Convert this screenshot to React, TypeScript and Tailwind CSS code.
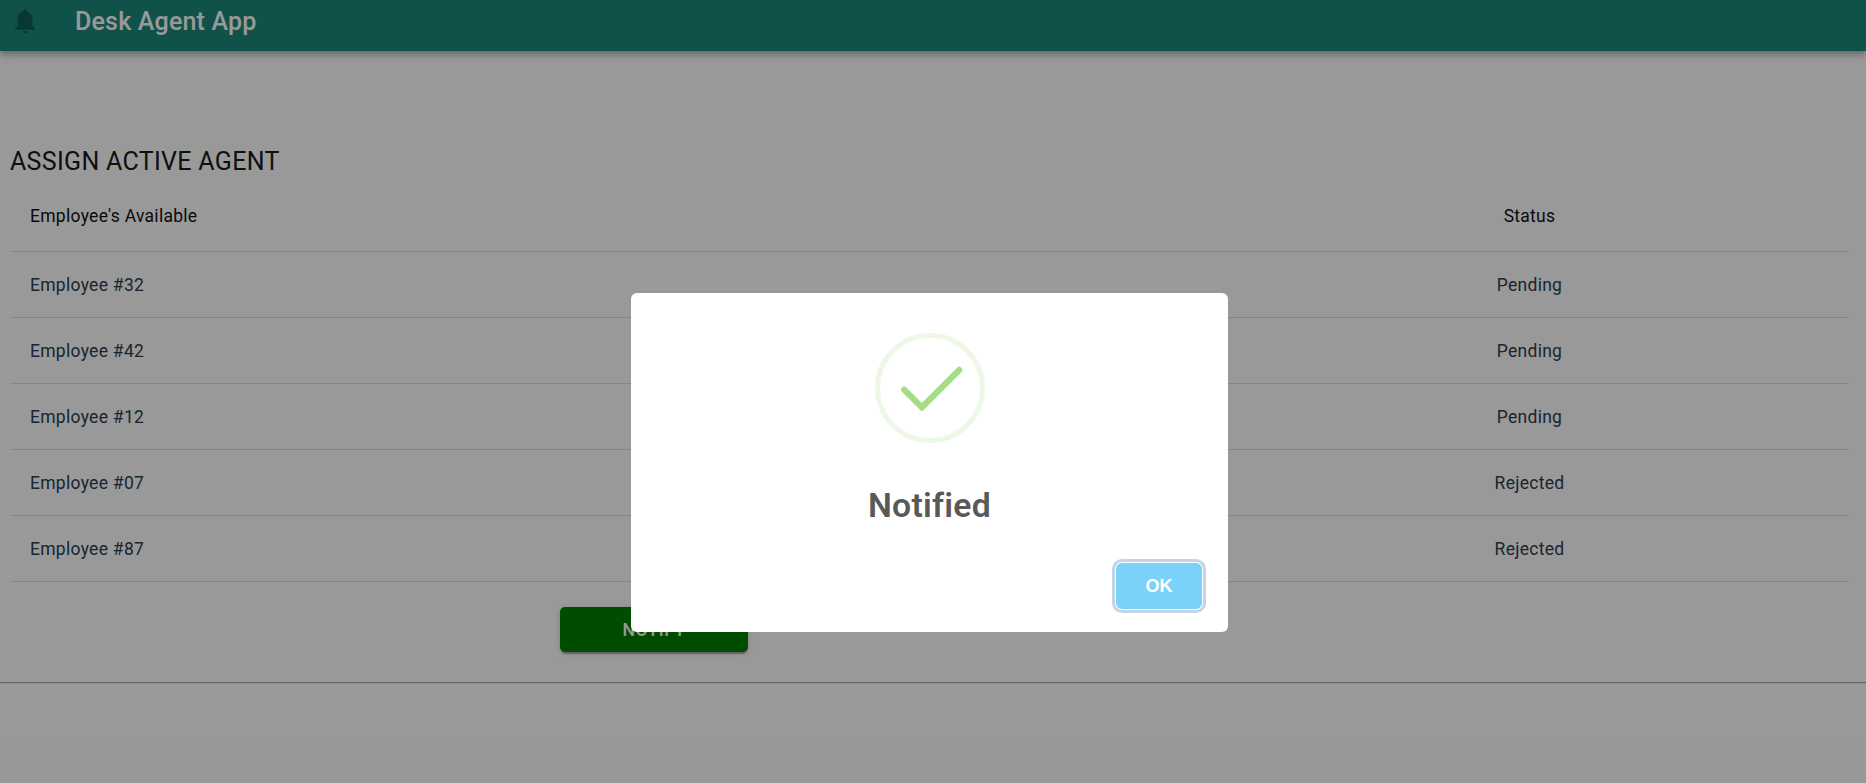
import React from "react";

const employees = [
  { id: "32", status: "Pending" },
  { id: "42", status: "Pending" },
  { id: "12", status: "Pending" },
  { id: "07", status: "Rejected" },
  { id: "87", status: "Rejected" },
];

function Header() {
  return (
    <header className="relative z-10 flex h-[51px] shrink-0 items-start bg-[#1c877b] px-[10px] shadow-[0_2px_5px_-1px_rgba(0,0,0,0.2),0_5px_6px_0_rgba(0,0,0,0.14),0_1px_12px_0_rgba(0,0,0,0.12)]">
      <svg viewBox="0 0 24 24" className="mt-[6px] h-[30px] w-[30px] fill-[#105e54]">
        <path d="M12 22c1.1 0 2-.9 2-2h-4c0 1.1.89 2 2 2zm6-6v-5c0-3.07-1.64-5.64-4.5-6.32V4c0-.83-.67-1.5-1.5-1.5s-1.5.67-1.5 1.5v.68C7.63 5.36 6 7.92 6 11v5l-2 2v1h16v-1l-2-2z" />
      </svg>
      <h1 className="ml-[35px] mt-0.5 text-[25px] font-medium leading-[40px] tracking-[0.0075em] text-white">
        Desk Agent App
      </h1>
    </header>
  );
}

function AgentTable() {
  return (
    <table className="w-full table-fixed border-separate border-spacing-0 text-[17.5px] tracking-[0.016em]">
      <colgroup>
        <col />
        <col className="w-[639px]" />
      </colgroup>
      <thead>
        <tr className="h-[71px] text-[#111]">
          <th className="border-b border-[#e0e0e0] px-5 py-0 text-left font-normal leading-[30px]">
            Employee's Available
          </th>
          <th className="border-b border-[#e0e0e0] px-5 py-0 text-center font-normal leading-[30px]">Status</th>
        </tr>
      </thead>
      <tbody>
        {employees.map((e) => (
          <tr key={e.id} className="h-[66px] text-[#2c3e50]">
            <td className="border-b border-[#e0e0e0] px-5 pb-0 pt-0.5 leading-[25px]">Employee #{e.id}</td>
            <td className="border-b border-[#e0e0e0] px-5 pb-0 pt-0.5 text-center leading-[25px]">{e.status}</td>
          </tr>
        ))}
      </tbody>
    </table>
  );
}

function SuccessIcon() {
  return (
    <svg viewBox="0 0 88 88" className="mt-10 h-[110px] w-[110px]">
      <circle cx="44" cy="44" r="42" fill="none" stroke="#a5dc86" strokeOpacity="0.2" strokeWidth="4" />
      <path d="M2.6 29.6l3 3M55.6 82.6l3 3" stroke="#a5dc86" strokeOpacity="0.25" strokeWidth="0.6" />
      <rect x="18" y="50" width="25" height="5" rx="2" fill="#a5dc86" transform="rotate(45 30.5 52.5)" />
      <rect x="29" y="42" width="47" height="5" rx="2" fill="#a5dc86" transform="rotate(-45 52.5 44.5)" />
    </svg>
  );
}

function Modal() {
  return (
    <div className="fixed inset-0 z-20 flex items-start bg-black/40 pl-[631px] pt-[293px]">
      <div className="flex h-[339px] w-[597px] flex-col items-center rounded-[6px] bg-white">
        <SuccessIcon />
        <h2 className="mt-[43px] text-[33.75px] font-semibold leading-[40px] tracking-[0.008em] text-[#595959]">
          Notified
        </h2>
        <button className="mr-[26px] mt-[37px] h-[46px] w-[86px] self-end rounded-[6px] bg-[#7cd1f9] pt-px font-['Liberation_Sans'] text-[18px] font-semibold text-white shadow-[0_0_0_1px_#fff,0_0_0_4px_rgba(43,114,165,0.29)]">
          OK
        </button>
      </div>
    </div>
  );
}

export default function App() {
  return (
    <div className="flex h-[783px] flex-col overflow-hidden bg-[#fdfdfd] font-[Roboto,sans-serif]">
      <Header />
      <main className="flex h-[632px] shrink-0 flex-col border-b border-[#a9a9a9] bg-white pl-[10px] pr-[17px] pt-[91px]">
        <h2 className="h-[39px] text-[25px] font-normal leading-[40px] tracking-[0.0125em] text-[#1a1a1a]">
          ASSIGN ACTIVE AGENT
        </h2>
        <AgentTable />
        <button className="ml-[550px] mt-[25px] h-[45px] w-[188px] rounded-[5px] bg-[#008000] pt-0.5 text-[17.5px] font-medium tracking-[0.02857em] text-white shadow-[0_4px_1px_-2px_rgba(0,0,0,0.2),0_2px_2px_0_rgba(0,0,0,0.14),0_1px_6px_0_rgba(0,0,0,0.12)]">
          NOTIFY
        </button>
      </main>
      <div className="h-[58px] shrink-0 border-t border-[#ececec] bg-white" />
      <Modal />
    </div>
  );
}
